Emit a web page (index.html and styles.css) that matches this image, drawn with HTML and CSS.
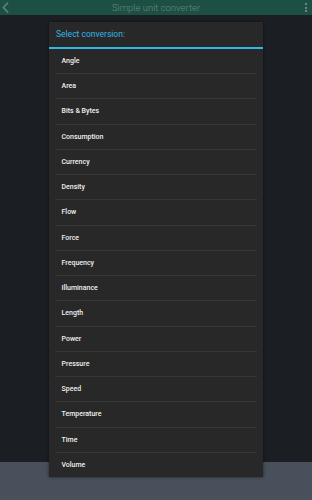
FILE: index.html
```html
<!DOCTYPE html>
<html>
<head>
<meta charset="utf-8">
<link rel="stylesheet" href="styles.css">
</head>
<body>
<div class="screen">
  <header class="appbar">
    <svg class="back" width="9" height="13" viewBox="0 0 9 13"><path d="M7 1.5 L2.5 6.5 L7 11.5" fill="none" stroke="#5f8177" stroke-width="1.7"/></svg>
    <div class="title">Simple unit converter</div>
    <div class="dots"><span></span><span></span><span></span></div>
  </header>
  <main class="content"></main>
  <footer class="bottom"></footer>

  <div class="dialog">
    <div class="dlg-head">Select conversion:</div>
    <div class="dlg-rule"></div>
    <ul class="list">
      <li>Angle</li>
      <li>Area</li>
      <li>Bits &amp; Bytes</li>
      <li>Consumption</li>
      <li>Currency</li>
      <li>Density</li>
      <li>Flow</li>
      <li>Force</li>
      <li>Frequency</li>
      <li>Illuminance</li>
      <li>Length</li>
      <li>Power</li>
      <li>Pressure</li>
      <li>Speed</li>
      <li>Temperature</li>
      <li>Time</li>
      <li>Volume</li>
    </ul>
  </div>
</div>
</body>
</html>
```

FILE: styles.css
```css
html, body {
  margin: 0;
  padding: 0;
  background: #1b1e23;
  overflow: hidden;
}
.screen {
  position: relative;
  width: 312px;
  height: 500px;
  display: flex;
  flex-direction: column;
  font-family: Roboto, "Liberation Sans", sans-serif;
}
.appbar {
  height: 15px;
  flex: none;
  background: #1d5045;
  display: flex;
  align-items: center;
  position: relative;
}
.back {
  margin-left: 1px;
  flex: none;
}
.title {
  position: absolute;
  left: 0;
  right: 0;
  top: 0;
  height: 15px;
  line-height: 15px;
  text-align: center;
  font-size: 9.5px;
  font-weight: 300;
  color: #6a8a80;
}
.dots {
  margin-left: auto;
  margin-right: 5px;
  display: flex;
  flex-direction: column;
  gap: 1.5px;
}
.dots span {
  display: block;
  width: 2px;
  height: 2px;
  background: #6a8a80;
}
.content {
  height: 447px;
  flex: none;
  background: #1b1e23;
}
.bottom {
  flex: 1;
  background: #48515b;
}
.dialog {
  position: absolute;
  left: 49px;
  top: 22px;
  width: 214px;
  height: 455px;
  background: #282828;
  box-shadow: 0 0 3px rgba(0, 0, 0, 0.6);
  display: flex;
  flex-direction: column;
}
.dlg-head {
  height: 25px;
  line-height: 25px;
  padding-left: 7px;
  font-size: 8.5px;
  color: #33b5e5;
}
.dlg-rule {
  height: 2px;
  background: #33b5e5;
}
.list {
  list-style: none;
  margin: 0;
  padding: 0;
}
.list li {
  height: 24.25px;
  margin: 0 6px;
  padding-left: 6.5px;
  display: flex;
  align-items: center;
  font-size: 7px;
  font-weight: 500;
  color: #f0f0f0;
  border-bottom: 1px solid #363636;
}
.list li:last-child {
  border-bottom: none;
}
```
